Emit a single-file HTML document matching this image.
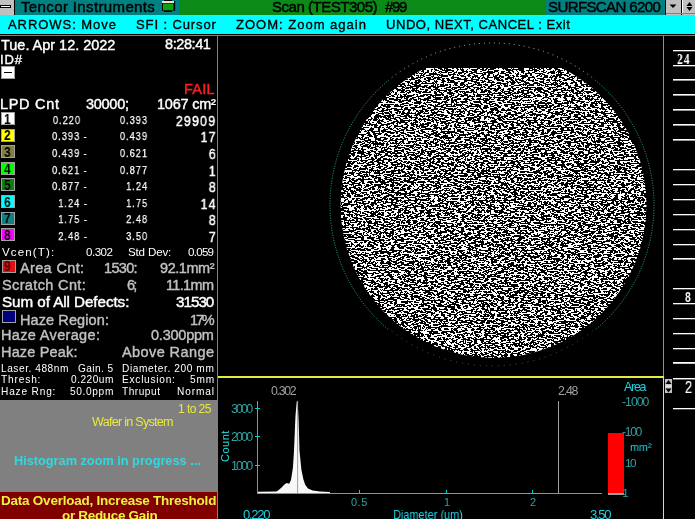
<!DOCTYPE html>
<html><head><meta charset="utf-8"><style>
html,body{margin:0;padding:0;background:#000;width:695px;height:519px;overflow:hidden;font-family:"Liberation Sans", sans-serif;}
#r{position:relative;width:695px;height:519px;overflow:hidden;background:#000;}
#r>div,#r>svg{position:absolute;}
#r>div{will-change:transform;}
</style></head><body><div id="r">
<div style="left:0px;top:0px;width:695px;height:14.5px;background:#008080;"></div>
<div style="left:0px;top:0px;width:14px;height:14.5px;background:#c0c0c0;"></div>
<div style="left:14px;top:0px;width:1px;height:14.5px;background:#000;"></div>
<div style="left:0px;top:5px;width:11px;height:3px;background:#000;"></div>
<div style="left:1px;top:6px;width:9px;height:1px;background:#fff;"></div>
<div style="left:178.5px;top:0px;width:367px;height:14.5px;background:#0c8a18;"></div>
<div style="left:665px;top:0px;width:1px;height:14.5px;background:#000;"></div>
<div style="left:666px;top:0px;width:15px;height:14.5px;background:#c0c0c0;"></div>
<div style="left:681px;top:0px;width:1px;height:14.5px;background:#000;"></div>
<div style="left:682px;top:0px;width:13px;height:14.5px;background:#c0c0c0;"></div>
<div style="top:-0.96px;font-size:15.07px;line-height:15.07px;color:#000;font-weight:normal;letter-spacing:0.342px;white-space:pre;left:21.00px;-webkit-text-stroke:0.45px #000;">Tencor Instruments</div>
<div style="top:-0.96px;font-size:15.07px;line-height:15.07px;color:#000;font-weight:normal;letter-spacing:-0.507px;white-space:pre;left:272.00px;-webkit-text-stroke:0.45px #000;">Scan (TEST305)</div>
<div style="top:-0.96px;font-size:15.07px;line-height:15.07px;color:#000;font-weight:normal;letter-spacing:-1.336px;white-space:pre;left:385.00px;-webkit-text-stroke:0.45px #000;">#99</div>
<div style="top:-0.96px;font-size:15.07px;line-height:15.07px;color:#000;font-weight:normal;letter-spacing:-0.638px;white-space:pre;left:548.00px;-webkit-text-stroke:0.45px #000;">SURFSCAN 6200</div>
<svg style="left:160px;top:0px" width="18" height="14"><rect x="4" y="0" width="8" height="1.2" fill="#000"/><rect x="2" y="1" width="12" height="2" fill="#e8e0e0"/><rect x="2" y="3" width="12" height="8" fill="#000"/><rect x="3" y="3.5" width="10.5" height="7" fill="#10a010"/><rect x="14" y="1" width="1.2" height="9.5" fill="#000"/><rect x="4" y="10.5" width="8" height="1.5" fill="#000"/></svg>
<svg style="left:666px;top:0px" width="29" height="14"><rect x="16" y="0" width="1" height="13" fill="#fff"/><rect x="0" y="13" width="29" height="1" fill="#808080"/><path d="M3.5 4.5 L10.5 4.5 L7 8 Z" fill="#000"/><path d="M20.5 6 L26.5 6 L23.5 2 Z M20.5 7 L26.5 7 L23.5 11 Z" fill="#000"/></svg>
<div style="left:0px;top:14.5px;width:695px;height:19.5px;background:#00ffff;"></div>
<div style="left:0px;top:34px;width:695px;height:1px;background:#000;"></div>
<div style="left:0px;top:35px;width:695px;height:1px;background:#808080;"></div>
<div style="top:17.96px;font-size:13.04px;line-height:13.04px;color:#000;font-weight:normal;letter-spacing:0.925px;white-space:pre;left:8.00px;-webkit-text-stroke:0.35px #000;">ARROWS: Move</div>
<div style="top:17.96px;font-size:13.04px;line-height:13.04px;color:#000;font-weight:normal;letter-spacing:0.881px;white-space:pre;left:136.00px;-webkit-text-stroke:0.35px #000;">SFI : Cursor</div>
<div style="top:17.96px;font-size:13.04px;line-height:13.04px;color:#000;font-weight:normal;letter-spacing:0.984px;white-space:pre;left:236.00px;-webkit-text-stroke:0.35px #000;">ZOOM: Zoom again</div>
<div style="top:17.96px;font-size:13.04px;line-height:13.04px;color:#000;font-weight:normal;letter-spacing:0.531px;white-space:pre;left:386.00px;-webkit-text-stroke:0.35px #000;">UNDO, NEXT, CANCEL : Exit</div>
<div style="left:217px;top:36px;width:1px;height:483px;background:#808080;"></div>
<div style="left:662.8px;top:36px;width:1.3px;height:341px;background:#909090;"></div>
<div style="left:218px;top:376.2px;width:446px;height:1.6px;background:#e4ec40;"></div>
<div style="left:662.8px;top:376.2px;width:1.3px;height:143px;background:#e4ec40;"></div>
<div style="top:37.73px;font-size:14.49px;line-height:14.49px;color:#ffffff;font-weight:normal;letter-spacing:-0.013px;white-space:pre;left:0.50px;-webkit-text-stroke:0.4px #ffffff;">Tue. Apr 12. 2022</div>
<div style="top:37.43px;font-size:14.49px;line-height:14.49px;color:#ffffff;font-weight:normal;letter-spacing:-0.406px;white-space:pre;right:484.88px;-webkit-text-stroke:0.4px #ffffff;">8:28:41</div>
<div style="top:52.96px;font-size:13.04px;line-height:13.04px;color:#ffffff;font-weight:normal;letter-spacing:0.859px;white-space:pre;left:0.00px;-webkit-text-stroke:0.4px #ffffff;">ID#</div>
<div style="left:1px;top:66px;width:14px;height:13px;background:#fff;box-shadow:inset 0 0 0 1px #a0a0a0;"></div>
<div style="left:4px;top:72px;width:8px;height:1.2px;background:#000;"></div>
<div style="top:81.93px;font-size:14.49px;line-height:14.49px;color:#ff2020;font-weight:normal;letter-spacing:0.272px;white-space:pre;left:183.70px;-webkit-text-stroke:0.4px #ff2020;">FAIL</div>
<div style="top:97.23px;font-size:14.49px;line-height:14.49px;color:#ffffff;font-weight:normal;letter-spacing:0.703px;white-space:pre;left:0.00px;-webkit-text-stroke:0.4px #ffffff;">LPD Cnt</div>
<div style="top:97.23px;font-size:14.49px;line-height:14.49px;color:#ffffff;font-weight:normal;letter-spacing:-0.270px;white-space:pre;left:86.00px;-webkit-text-stroke:0.4px #ffffff;">30000;</div>
<div style="top:97.23px;font-size:14.49px;line-height:14.49px;color:#ffffff;font-weight:normal;letter-spacing:-0.205px;white-space:pre;left:157.00px;-webkit-text-stroke:0.4px #ffffff;">1067 cm²</div>
<div style="left:1px;top:112px;width:14px;height:13px;background:#ffffff;box-shadow:inset 0 0 0 1px #a0a0a0;"></div>
<div style="top:110.85px;font-size:15.00px;line-height:15.00px;color:#000;font-weight:bold;letter-spacing:0.000px;white-space:pre;left:3.50px;transform:scaleX(0.8);transform-origin:0 0;">1</div>
<div style="top:114.95px;font-size:11.80px;line-height:11.80px;color:#ffffff;font-weight:normal;letter-spacing:1.300px;white-space:pre;right:614.01px;transform:scaleX(0.78);transform-origin:100% 0;-webkit-text-stroke:0.25px #ffffff;">0.220</div>
<div style="top:114.95px;font-size:11.80px;line-height:11.80px;color:#ffffff;font-weight:normal;letter-spacing:1.300px;white-space:pre;right:547.01px;transform:scaleX(0.78);transform-origin:100% 0;-webkit-text-stroke:0.25px #ffffff;">0.393</div>
<div style="top:112.82px;font-size:15.20px;line-height:15.20px;color:#ffffff;font-weight:normal;letter-spacing:1.400px;white-space:pre;right:478.64px;transform:scaleX(0.82);transform-origin:100% 0;-webkit-text-stroke:0.45px #fff;">29909</div>
<div style="left:1px;top:128.5px;width:14px;height:13px;background:#ffff00;box-shadow:inset 0 0 0 1px #a0a0a0;"></div>
<div style="top:127.35px;font-size:15.00px;line-height:15.00px;color:#000;font-weight:bold;letter-spacing:0.000px;white-space:pre;left:3.50px;transform:scaleX(0.8);transform-origin:0 0;">2</div>
<div style="top:131.45px;font-size:11.80px;line-height:11.80px;color:#ffffff;font-weight:normal;letter-spacing:1.300px;white-space:pre;right:607.00px;transform:scaleX(0.78);transform-origin:100% 0;-webkit-text-stroke:0.25px #ffffff;">0.393 -</div>
<div style="top:131.45px;font-size:11.80px;line-height:11.80px;color:#ffffff;font-weight:normal;letter-spacing:1.300px;white-space:pre;right:547.01px;transform:scaleX(0.78);transform-origin:100% 0;-webkit-text-stroke:0.25px #ffffff;">0.439</div>
<div style="top:129.32px;font-size:15.20px;line-height:15.20px;color:#ffffff;font-weight:normal;letter-spacing:1.400px;white-space:pre;right:478.62px;transform:scaleX(0.82);transform-origin:100% 0;-webkit-text-stroke:0.45px #fff;">17</div>
<div style="left:1px;top:145px;width:14px;height:13px;background:#808040;box-shadow:inset 0 0 0 1px #a0a0a0;"></div>
<div style="top:143.85px;font-size:15.00px;line-height:15.00px;color:#000;font-weight:bold;letter-spacing:0.000px;white-space:pre;left:3.50px;transform:scaleX(0.8);transform-origin:0 0;">3</div>
<div style="top:147.95px;font-size:11.80px;line-height:11.80px;color:#ffffff;font-weight:normal;letter-spacing:1.300px;white-space:pre;right:607.00px;transform:scaleX(0.78);transform-origin:100% 0;-webkit-text-stroke:0.25px #ffffff;">0.439 -</div>
<div style="top:147.95px;font-size:11.80px;line-height:11.80px;color:#ffffff;font-weight:normal;letter-spacing:1.300px;white-space:pre;right:547.01px;transform:scaleX(0.78);transform-origin:100% 0;-webkit-text-stroke:0.25px #ffffff;">0.621</div>
<div style="top:145.82px;font-size:15.20px;line-height:15.20px;color:#ffffff;font-weight:normal;letter-spacing:1.400px;white-space:pre;right:478.64px;transform:scaleX(0.82);transform-origin:100% 0;-webkit-text-stroke:0.45px #fff;">6</div>
<div style="left:1px;top:161.7px;width:14px;height:13px;background:#00ff00;box-shadow:inset 0 0 0 1px #a0a0a0;"></div>
<div style="top:160.55px;font-size:15.00px;line-height:15.00px;color:#000;font-weight:bold;letter-spacing:0.000px;white-space:pre;left:3.50px;transform:scaleX(0.8);transform-origin:0 0;">4</div>
<div style="top:164.65px;font-size:11.80px;line-height:11.80px;color:#ffffff;font-weight:normal;letter-spacing:1.300px;white-space:pre;right:607.00px;transform:scaleX(0.78);transform-origin:100% 0;-webkit-text-stroke:0.25px #ffffff;">0.621 -</div>
<div style="top:164.65px;font-size:11.80px;line-height:11.80px;color:#ffffff;font-weight:normal;letter-spacing:1.300px;white-space:pre;right:547.01px;transform:scaleX(0.78);transform-origin:100% 0;-webkit-text-stroke:0.25px #ffffff;">0.877</div>
<div style="top:162.52px;font-size:15.20px;line-height:15.20px;color:#ffffff;font-weight:normal;letter-spacing:1.400px;white-space:pre;right:478.64px;transform:scaleX(0.82);transform-origin:100% 0;-webkit-text-stroke:0.45px #fff;">1</div>
<div style="left:1px;top:178px;width:14px;height:13px;background:#108010;box-shadow:inset 0 0 0 1px #a0a0a0;"></div>
<div style="top:176.85px;font-size:15.00px;line-height:15.00px;color:#000;font-weight:bold;letter-spacing:0.000px;white-space:pre;left:3.50px;transform:scaleX(0.8);transform-origin:0 0;">5</div>
<div style="top:180.95px;font-size:11.80px;line-height:11.80px;color:#ffffff;font-weight:normal;letter-spacing:1.300px;white-space:pre;right:607.00px;transform:scaleX(0.78);transform-origin:100% 0;-webkit-text-stroke:0.25px #ffffff;">0.877 -</div>
<div style="top:180.95px;font-size:11.80px;line-height:11.80px;color:#ffffff;font-weight:normal;letter-spacing:1.300px;white-space:pre;right:546.97px;transform:scaleX(0.78);transform-origin:100% 0;-webkit-text-stroke:0.25px #ffffff;">1.24</div>
<div style="top:178.82px;font-size:15.20px;line-height:15.20px;color:#ffffff;font-weight:normal;letter-spacing:1.400px;white-space:pre;right:478.64px;transform:scaleX(0.82);transform-origin:100% 0;-webkit-text-stroke:0.45px #fff;">8</div>
<div style="left:1px;top:195px;width:14px;height:13px;background:#00ffff;box-shadow:inset 0 0 0 1px #a0a0a0;"></div>
<div style="top:193.85px;font-size:15.00px;line-height:15.00px;color:#000;font-weight:bold;letter-spacing:0.000px;white-space:pre;left:3.50px;transform:scaleX(0.8);transform-origin:0 0;">6</div>
<div style="top:197.95px;font-size:11.80px;line-height:11.80px;color:#ffffff;font-weight:normal;letter-spacing:1.300px;white-space:pre;right:606.97px;transform:scaleX(0.78);transform-origin:100% 0;-webkit-text-stroke:0.25px #ffffff;">1.24 -</div>
<div style="top:197.95px;font-size:11.80px;line-height:11.80px;color:#ffffff;font-weight:normal;letter-spacing:1.300px;white-space:pre;right:546.97px;transform:scaleX(0.78);transform-origin:100% 0;-webkit-text-stroke:0.25px #ffffff;">1.75</div>
<div style="top:195.82px;font-size:15.20px;line-height:15.20px;color:#ffffff;font-weight:normal;letter-spacing:1.400px;white-space:pre;right:478.62px;transform:scaleX(0.82);transform-origin:100% 0;-webkit-text-stroke:0.45px #fff;">14</div>
<div style="left:1px;top:211.5px;width:14px;height:13px;background:#108080;box-shadow:inset 0 0 0 1px #a0a0a0;"></div>
<div style="top:210.35px;font-size:15.00px;line-height:15.00px;color:#000;font-weight:bold;letter-spacing:0.000px;white-space:pre;left:3.50px;transform:scaleX(0.8);transform-origin:0 0;">7</div>
<div style="top:214.45px;font-size:11.80px;line-height:11.80px;color:#ffffff;font-weight:normal;letter-spacing:1.300px;white-space:pre;right:606.97px;transform:scaleX(0.78);transform-origin:100% 0;-webkit-text-stroke:0.25px #ffffff;">1.75 -</div>
<div style="top:214.45px;font-size:11.80px;line-height:11.80px;color:#ffffff;font-weight:normal;letter-spacing:1.300px;white-space:pre;right:546.97px;transform:scaleX(0.78);transform-origin:100% 0;-webkit-text-stroke:0.25px #ffffff;">2.48</div>
<div style="top:212.32px;font-size:15.20px;line-height:15.20px;color:#ffffff;font-weight:normal;letter-spacing:1.400px;white-space:pre;right:478.64px;transform:scaleX(0.82);transform-origin:100% 0;-webkit-text-stroke:0.45px #fff;">8</div>
<div style="left:1px;top:228px;width:14px;height:13px;background:#ff00ff;box-shadow:inset 0 0 0 1px #a0a0a0;"></div>
<div style="top:226.85px;font-size:15.00px;line-height:15.00px;color:#000;font-weight:bold;letter-spacing:0.000px;white-space:pre;left:3.50px;transform:scaleX(0.8);transform-origin:0 0;">8</div>
<div style="top:230.95px;font-size:11.80px;line-height:11.80px;color:#ffffff;font-weight:normal;letter-spacing:1.300px;white-space:pre;right:606.97px;transform:scaleX(0.78);transform-origin:100% 0;-webkit-text-stroke:0.25px #ffffff;">2.48 -</div>
<div style="top:230.95px;font-size:11.80px;line-height:11.80px;color:#ffffff;font-weight:normal;letter-spacing:1.300px;white-space:pre;right:546.97px;transform:scaleX(0.78);transform-origin:100% 0;-webkit-text-stroke:0.25px #ffffff;">3.50</div>
<div style="top:228.82px;font-size:15.20px;line-height:15.20px;color:#ffffff;font-weight:normal;letter-spacing:1.400px;white-space:pre;right:478.64px;transform:scaleX(0.82);transform-origin:100% 0;-webkit-text-stroke:0.45px #fff;">7</div>
<div style="top:247.39px;font-size:11.59px;line-height:11.59px;color:#ffffff;font-weight:normal;letter-spacing:1.105px;white-space:pre;left:1.60px;">Vcen(T):</div>
<div style="top:247.39px;font-size:11.59px;line-height:11.59px;color:#ffffff;font-weight:normal;letter-spacing:-0.511px;white-space:pre;left:86.00px;">0.302</div>
<div style="top:247.39px;font-size:11.59px;line-height:11.59px;color:#ffffff;font-weight:normal;letter-spacing:-0.166px;white-space:pre;left:127.70px;">Std Dev:</div>
<div style="top:247.39px;font-size:11.59px;line-height:11.59px;color:#ffffff;font-weight:normal;letter-spacing:-0.736px;white-space:pre;left:188.30px;">0.059</div>
<div style="left:1.5px;top:260px;width:14px;height:13px;background:#e01010;box-shadow:inset 0 0 0 1px #a0a0a0;"></div>
<div style="top:258.99px;font-size:14.78px;line-height:14.78px;color:#500000;font-weight:bold;letter-spacing:0.000px;white-space:pre;left:4.20px;transform:scaleX(0.8);transform-origin:0 0;">9</div>
<div style="top:261.23px;font-size:14.49px;line-height:14.49px;color:#c0c0c0;font-weight:normal;letter-spacing:0.359px;white-space:pre;left:19.80px;-webkit-text-stroke:0.4px #c0c0c0;">Area Cnt:</div>
<div style="top:261.23px;font-size:14.49px;line-height:14.49px;color:#c0c0c0;font-weight:normal;letter-spacing:-0.676px;white-space:pre;left:104.00px;-webkit-text-stroke:0.4px #c0c0c0;">1530:</div>
<div style="top:261.23px;font-size:14.49px;line-height:14.49px;color:#c0c0c0;font-weight:normal;letter-spacing:-0.429px;white-space:pre;left:159.80px;-webkit-text-stroke:0.4px #c0c0c0;">92.1mm²</div>
<div style="top:277.93px;font-size:14.49px;line-height:14.49px;color:#c0c0c0;font-weight:normal;letter-spacing:0.372px;white-space:pre;left:1.60px;-webkit-text-stroke:0.4px #c0c0c0;">Scratch Cnt:</div>
<div style="top:277.93px;font-size:14.49px;line-height:14.49px;color:#c0c0c0;font-weight:normal;letter-spacing:-1.701px;white-space:pre;left:126.60px;-webkit-text-stroke:0.4px #c0c0c0;">6;</div>
<div style="top:277.93px;font-size:14.49px;line-height:14.49px;color:#c0c0c0;font-weight:normal;letter-spacing:-0.661px;white-space:pre;left:166.00px;-webkit-text-stroke:0.4px #c0c0c0;">11.1mm</div>
<div style="top:293.62px;font-size:15.22px;line-height:15.22px;color:#ffffff;font-weight:normal;letter-spacing:-0.066px;white-space:pre;left:1.60px;-webkit-text-stroke:0.45px #fff;">Sum of All Defects:</div>
<div style="top:293.62px;font-size:15.22px;line-height:15.22px;color:#ffffff;font-weight:normal;letter-spacing:-1.001px;white-space:pre;left:175.70px;-webkit-text-stroke:0.45px #fff;">31530</div>
<div style="left:1.5px;top:310px;width:14px;height:13px;background:#000080;box-shadow:inset 0 0 0 1px #a0a0a0;"></div>
<div style="top:312.53px;font-size:14.49px;line-height:14.49px;color:#c0c0c0;font-weight:normal;letter-spacing:0.107px;white-space:pre;left:20.00px;-webkit-text-stroke:0.4px #c0c0c0;">Haze Region:</div>
<div style="top:312.53px;font-size:14.49px;line-height:14.49px;color:#c0c0c0;font-weight:normal;letter-spacing:-2.143px;white-space:pre;left:189.70px;-webkit-text-stroke:0.4px #c0c0c0;">17%</div>
<div style="top:328.23px;font-size:14.49px;line-height:14.49px;color:#c0c0c0;font-weight:normal;letter-spacing:0.351px;white-space:pre;left:1.00px;-webkit-text-stroke:0.4px #c0c0c0;">Haze Average:</div>
<div style="top:328.23px;font-size:14.49px;line-height:14.49px;color:#c0c0c0;font-weight:normal;letter-spacing:-0.213px;white-space:pre;left:151.00px;-webkit-text-stroke:0.4px #c0c0c0;">0.300ppm</div>
<div style="top:344.93px;font-size:14.49px;line-height:14.49px;color:#c0c0c0;font-weight:normal;letter-spacing:0.175px;white-space:pre;left:1.00px;-webkit-text-stroke:0.4px #c0c0c0;">Haze Peak:</div>
<div style="top:344.93px;font-size:14.49px;line-height:14.49px;color:#c0c0c0;font-weight:normal;letter-spacing:0.417px;white-space:pre;left:122.00px;-webkit-text-stroke:0.4px #c0c0c0;">Above Range</div>
<div style="top:363.91px;font-size:10.14px;line-height:10.14px;color:#ffffff;font-weight:normal;letter-spacing:0.547px;white-space:pre;left:0.50px;">Laser. 488nm</div>
<div style="top:363.91px;font-size:10.14px;line-height:10.14px;color:#ffffff;font-weight:normal;letter-spacing:0.414px;white-space:pre;left:77.80px;">Gain. 5</div>
<div style="top:363.91px;font-size:10.14px;line-height:10.14px;color:#ffffff;font-weight:normal;letter-spacing:0.608px;white-space:pre;left:122.00px;">Diameter. 200 mm</div>
<div style="top:375.11px;font-size:10.14px;line-height:10.14px;color:#ffffff;font-weight:normal;letter-spacing:0.851px;white-space:pre;left:0.50px;">Thresh:</div>
<div style="top:375.11px;font-size:10.14px;line-height:10.14px;color:#ffffff;font-weight:normal;letter-spacing:0.506px;white-space:pre;left:70.50px;">0.220um</div>
<div style="top:375.11px;font-size:10.14px;line-height:10.14px;color:#ffffff;font-weight:normal;letter-spacing:0.749px;white-space:pre;left:122.00px;">Exclusion:</div>
<div style="top:375.11px;font-size:10.14px;line-height:10.14px;color:#ffffff;font-weight:normal;letter-spacing:0.889px;white-space:pre;left:189.70px;">5mm</div>
<div style="top:386.91px;font-size:10.14px;line-height:10.14px;color:#ffffff;font-weight:normal;letter-spacing:0.821px;white-space:pre;left:0.50px;">Haze Rng:</div>
<div style="top:386.91px;font-size:10.14px;line-height:10.14px;color:#ffffff;font-weight:normal;letter-spacing:0.656px;white-space:pre;left:69.60px;">50.0ppm</div>
<div style="top:386.91px;font-size:10.14px;line-height:10.14px;color:#ffffff;font-weight:normal;letter-spacing:0.508px;white-space:pre;left:122.00px;">Thruput</div>
<div style="top:386.91px;font-size:10.14px;line-height:10.14px;color:#ffffff;font-weight:normal;letter-spacing:0.897px;white-space:pre;left:176.80px;">Normal</div>
<div style="left:0px;top:400px;width:217px;height:91.5px;background:#808080;"></div>
<div style="left:0px;top:491.5px;width:217px;height:27.5px;background:#800000;"></div>
<div style="top:402.92px;font-size:12.03px;line-height:12.03px;color:#e8e840;font-weight:normal;letter-spacing:-0.568px;white-space:pre;left:177.80px;">1 to 25</div>
<div style="top:416.43px;font-size:12.61px;line-height:12.61px;color:#e8e840;font-weight:normal;letter-spacing:-0.746px;white-space:pre;left:92.40px;">Wafer in System</div>
<div style="top:454.50px;font-size:12.75px;line-height:12.75px;color:#30d8e0;font-weight:bold;letter-spacing:-0.010px;white-space:pre;left:14.20px;">Histogram zoom in progress ...</div>
<div style="top:494.19px;font-size:13.48px;line-height:13.48px;color:#f0f040;font-weight:bold;letter-spacing:-0.217px;white-space:pre;left:0.50px;">Data Overload, Increase Threshold</div>
<div style="top:508.89px;font-size:13.48px;line-height:13.48px;color:#f0f040;font-weight:bold;letter-spacing:-0.300px;white-space:pre;left:62.10px;">or Reduce Gain</div>
<svg style="left:218px;top:36px" width="445" height="341">
<defs>
<filter id="nz" x="0" y="0" width="445" height="341" filterUnits="userSpaceOnUse" color-interpolation-filters="sRGB">
<feTurbulence type="fractalNoise" baseFrequency="0.3 0.7" numOctaves="3" seed="7" result="t"/>
<feColorMatrix type="matrix" values="0 0 0 0 1  0 0 0 0 1  0 0 0 0 1  8 0 0 0 -3.62"/>
<feComponentTransfer><feFuncA type="discrete" tableValues="0 1"/></feComponentTransfer>
</filter>
<clipPath id="wc"><circle cx="275.5" cy="169" r="153"/></clipPath><clipPath id="wf"><rect x="0" y="32" width="445" height="309"/></clipPath>
</defs>
<g clip-path="url(#wf)"><g clip-path="url(#wc)"><rect x="0" y="32" width="445" height="309" fill="#fff" filter="url(#nz)"/></g></g>
<clipPath id="lo"><rect x="0" y="44" width="445" height="250"/></clipPath><clipPath id="bt"><rect x="0" y="294" width="445" height="50"/></clipPath><clipPath id="hi"><rect x="0" y="0" width="445" height="44"/></clipPath><circle cx="274" cy="169" r="162" fill="none" stroke="#30b088" stroke-width="1" stroke-dasharray="1 1.5" clip-path="url(#lo)"/><circle cx="274" cy="169" r="162" fill="none" stroke="#b0b8b0" stroke-width="1" stroke-dasharray="1 4" clip-path="url(#hi)"/><circle cx="274" cy="169" r="161" fill="none" stroke="#505858" stroke-width="1" stroke-dasharray="1 5" clip-path="url(#bt)"/>
</svg>
<div style="left:673px;top:50px;width:22px;height:1px;background:#ffffff;"></div>
<div style="left:673px;top:51px;width:22px;height:1px;background:rgba(255,255,255,0.30);"></div>
<div style="left:673px;top:65px;width:22px;height:1px;background:#ffffff;"></div>
<div style="left:673px;top:66px;width:22px;height:1px;background:rgba(255,255,255,0.30);"></div>
<div style="left:673px;top:79px;width:22px;height:1px;background:#ffffff;"></div>
<div style="left:673px;top:80px;width:22px;height:1px;background:rgba(255,255,255,0.60);"></div>
<div style="left:673px;top:94px;width:22px;height:1px;background:#ffffff;"></div>
<div style="left:673px;top:95px;width:22px;height:1px;background:rgba(255,255,255,0.60);"></div>
<div style="left:673px;top:109px;width:22px;height:1px;background:#ffffff;"></div>
<div style="left:673px;top:110px;width:22px;height:1px;background:rgba(255,255,255,0.60);"></div>
<div style="left:673px;top:124px;width:22px;height:1px;background:#ffffff;"></div>
<div style="left:673px;top:125px;width:22px;height:1px;background:rgba(255,255,255,0.60);"></div>
<div style="left:673px;top:139px;width:22px;height:1px;background:#ffffff;"></div>
<div style="left:673px;top:140px;width:22px;height:1px;background:rgba(255,255,255,0.60);"></div>
<div style="left:673px;top:169px;width:22px;height:1px;background:#ffffff;"></div>
<div style="left:673px;top:170px;width:22px;height:1px;background:rgba(255,255,255,0.30);"></div>
<div style="left:673px;top:184px;width:22px;height:1px;background:#ffffff;"></div>
<div style="left:673px;top:185px;width:22px;height:1px;background:rgba(255,255,255,0.30);"></div>
<div style="left:673px;top:199px;width:22px;height:1px;background:#ffffff;"></div>
<div style="left:673px;top:200px;width:22px;height:1px;background:rgba(255,255,255,0.30);"></div>
<div style="left:673px;top:214px;width:22px;height:1px;background:#ffffff;"></div>
<div style="left:673px;top:215px;width:22px;height:1px;background:rgba(255,255,255,0.30);"></div>
<div style="left:673px;top:229px;width:22px;height:1px;background:#ffffff;"></div>
<div style="left:673px;top:230px;width:22px;height:1px;background:rgba(255,255,255,0.30);"></div>
<div style="left:673px;top:244px;width:22px;height:1px;background:#ffffff;"></div>
<div style="left:673px;top:245px;width:22px;height:1px;background:rgba(255,255,255,0.30);"></div>
<div style="left:673px;top:258px;width:22px;height:1px;background:#ffffff;"></div>
<div style="left:673px;top:259px;width:22px;height:1px;background:rgba(255,255,255,0.60);"></div>
<div style="left:673px;top:288px;width:22px;height:1px;background:#ffffff;"></div>
<div style="left:673px;top:289px;width:22px;height:1px;background:rgba(255,255,255,0.30);"></div>
<div style="left:673px;top:303px;width:22px;height:1px;background:#ffffff;"></div>
<div style="left:673px;top:304px;width:22px;height:1px;background:rgba(255,255,255,0.30);"></div>
<div style="left:673px;top:318px;width:22px;height:1px;background:#ffffff;"></div>
<div style="left:673px;top:319px;width:22px;height:1px;background:rgba(255,255,255,0.30);"></div>
<div style="left:673px;top:333px;width:22px;height:1px;background:#ffffff;"></div>
<div style="left:673px;top:334px;width:22px;height:1px;background:rgba(255,255,255,0.30);"></div>
<div style="left:673px;top:348px;width:22px;height:1px;background:#ffffff;"></div>
<div style="left:673px;top:349px;width:22px;height:1px;background:rgba(255,255,255,0.30);"></div>
<div style="left:673px;top:362px;width:22px;height:1px;background:#ffffff;"></div>
<div style="left:673px;top:363px;width:22px;height:1px;background:rgba(255,255,255,0.78);"></div>
<div style="left:673px;top:378px;width:22px;height:1px;background:#ffffff;"></div>
<div style="left:673px;top:379px;width:22px;height:1px;background:rgba(255,255,255,0.42);"></div>
<div style="left:673px;top:408px;width:22px;height:1px;background:#ffffff;"></div>
<div style="left:673px;top:409px;width:22px;height:1px;background:rgba(255,255,255,0.30);"></div>
<div style="top:51.73px;font-size:14.49px;line-height:14.49px;color:#ffffff;font-weight:bold;letter-spacing:1.163px;white-space:pre;left:676.80px;transform:scaleX(0.8);transform-origin:0 0;font-family:'Liberation Serif';">24</div>
<div style="top:289.73px;font-size:14.49px;line-height:14.49px;color:#ffffff;font-weight:bold;letter-spacing:0.000px;white-space:pre;left:684.80px;transform:scaleX(0.72);transform-origin:0 0;">8</div>
<div style="top:379.71px;font-size:15.94px;line-height:15.94px;color:#ffffff;font-weight:normal;letter-spacing:0.000px;white-space:pre;left:684.80px;transform:scaleX(0.8);transform-origin:0 0;-webkit-text-stroke:0.2px #ffffff;">2</div>
<svg style="left:665px;top:379px" width="7" height="14"><rect width="7" height="14" fill="#c0c0c0"/><path d="M0.5 5 L3.5 1 L6.5 5 Z M0.5 9.5 L3.5 13.5 L6.5 9.5 Z" fill="#000"/><rect x="0.5" y="6" width="6" height="2.5" fill="#e0e0e0"/></svg>
<div style="left:257px;top:401px;width:1.2px;height:93px;background:#00d0d0;"></div>
<div style="left:257px;top:493px;width:345px;height:1.2px;background:#00d0d0;"></div>
<div style="left:255px;top:407.9px;width:5px;height:1.2px;background:#00d0d0;"></div>
<div style="left:255px;top:436.3px;width:5px;height:1.2px;background:#00d0d0;"></div>
<div style="left:255px;top:464.9px;width:5px;height:1.2px;background:#00d0d0;"></div>
<div style="left:358.5px;top:489.5px;width:1.2px;height:4px;background:#00d0d0;"></div>
<div style="left:446.1px;top:489.5px;width:1.2px;height:4px;background:#00d0d0;"></div>
<div style="left:531.9px;top:489.5px;width:1.2px;height:4px;background:#00d0d0;"></div>
<div style="top:403.35px;font-size:12.46px;line-height:12.46px;color:#30a0a0;font-weight:normal;letter-spacing:-1.877px;white-space:pre;left:231.30px;">3000</div>
<div style="top:431.45px;font-size:12.46px;line-height:12.46px;color:#30a0a0;font-weight:normal;letter-spacing:-1.877px;white-space:pre;left:231.30px;">2000</div>
<div style="top:459.65px;font-size:12.46px;line-height:12.46px;color:#30a0a0;font-weight:normal;letter-spacing:-1.877px;white-space:pre;left:231.30px;">1000</div>
<div style="left:210px;top:441px;width:30px;height:12px;font-size:11px;line-height:12px;color:#20e0e0;transform:rotate(-90deg);letter-spacing:0.5px;text-align:center;">Count</div>
<div style="top:497.00px;font-size:10.87px;line-height:10.87px;color:#30a0a0;font-weight:normal;letter-spacing:0.546px;white-space:pre;left:350.50px;">0.5</div>
<div style="top:497.00px;font-size:10.87px;line-height:10.87px;color:#30a0a0;font-weight:normal;letter-spacing:0.000px;white-space:pre;left:444.40px;">1</div>
<div style="top:497.00px;font-size:10.87px;line-height:10.87px;color:#30a0a0;font-weight:normal;letter-spacing:0.000px;white-space:pre;left:529.50px;">2</div>
<div style="top:507.96px;font-size:13.04px;line-height:13.04px;color:#20d0e0;font-weight:normal;letter-spacing:-1.268px;white-space:pre;left:242.80px;">0.220</div>
<div style="top:508.36px;font-size:13.04px;line-height:13.04px;color:#20d0e0;font-weight:normal;letter-spacing:-0.011px;white-space:pre;left:392.80px;transform:scaleX(0.84);transform-origin:0 0;">Diameter (um)</div>
<div style="top:507.96px;font-size:13.04px;line-height:13.04px;color:#20d0e0;font-weight:normal;letter-spacing:-1.290px;white-space:pre;left:590.00px;">3.50</div>
<div style="top:384.57px;font-size:12.32px;line-height:12.32px;color:#a0a0a0;font-weight:normal;letter-spacing:-1.315px;white-space:pre;left:270.80px;">0.302</div>
<div style="top:384.77px;font-size:12.32px;line-height:12.32px;color:#a0a0a0;font-weight:normal;letter-spacing:-1.187px;white-space:pre;left:558.00px;">2.48</div>
<div style="left:558px;top:401px;width:1px;height:92px;background:#a0a0a0;"></div>
<svg style="left:218px;top:377px" width="445" height="142"><polygon points="40.0,116.0 40.0,114.8 58.0,114.5 59.8,113.8 63.6,110.6 66.4,107.4 68.7,105.9 71.2,106.8 73.0,103.0 74.9,90.8 75.9,75.7 76.8,55.0 77.4,39.9 78.7,24.8 79.6,23.8 80.6,43.6 81.5,73.8 83.4,92.7 85.3,102.0 87.2,107.8 90.0,111.6 94.7,113.5 102.0,114.4 112.0,115.0 112.0,116.0" fill="#f8f8f8"/><rect x="79.10000000000002" y="24" width="1" height="92" fill="#a0a0a0"/></svg>
<div style="left:608px;top:432.7px;width:16px;height:60.3px;background:#ff0000;"></div>
<div style="left:608px;top:492.5px;width:16px;height:1.5px;background:#a0a0a0;"></div>
<div style="top:381.05px;font-size:12.46px;line-height:12.46px;color:#20d0e0;font-weight:normal;letter-spacing:-1.287px;white-space:pre;left:623.50px;">Area</div>
<div style="top:395.59px;font-size:12.17px;line-height:12.17px;color:#30a0a0;font-weight:normal;letter-spacing:-0.966px;white-space:pre;left:622.30px;">-1000</div>
<div style="top:425.69px;font-size:12.17px;line-height:12.17px;color:#30a0a0;font-weight:normal;letter-spacing:-1.316px;white-space:pre;left:622.30px;">-100</div>
<div style="top:441.72px;font-size:11.40px;line-height:11.40px;color:#20d0e0;font-weight:normal;letter-spacing:0.000px;white-space:pre;left:629.70px;transform:scaleX(0.94);transform-origin:0 0;">mm²</div>
<div style="top:456.76px;font-size:11.74px;line-height:11.74px;color:#30a0a0;font-weight:normal;letter-spacing:-1.430px;white-space:pre;left:625.00px;">10</div>
<div style="top:486.96px;font-size:11.74px;line-height:11.74px;color:#30a0a0;font-weight:normal;letter-spacing:-3.548px;white-space:pre;left:622.30px;">-1</div>
</div></body></html>
